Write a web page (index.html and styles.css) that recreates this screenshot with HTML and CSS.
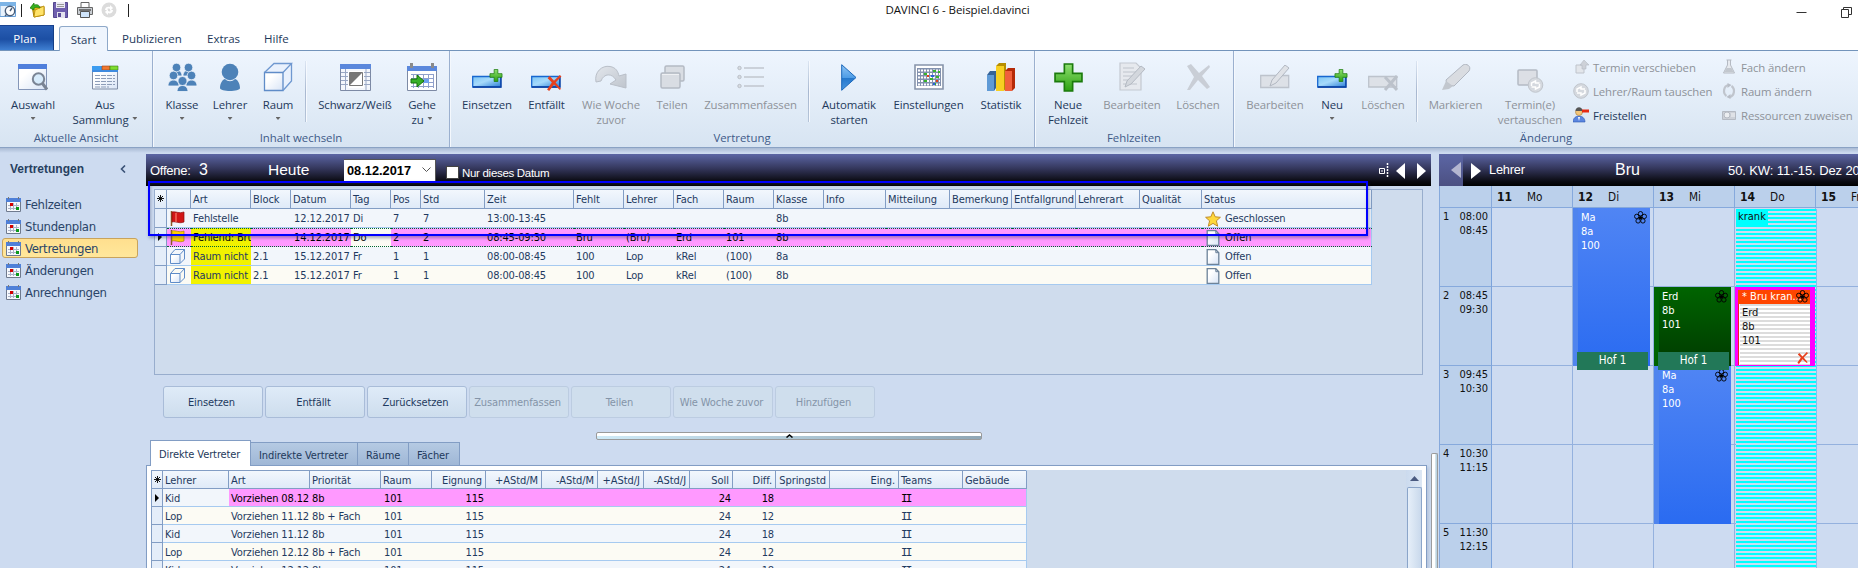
FILE: index.html
```html
<!DOCTYPE html>
<html lang="de">
<head>
<meta charset="utf-8">
<title>DAVINCI 6 - Beispiel.davinci</title>
<link rel="stylesheet" href="styles.css">
</head>
<body>
<svg class="defs" aria-hidden="true">
  <defs>
    <linearGradient id="gBlue" x1="0" y1="0" x2="1" y2="1"><stop offset="0" stop-color="#7cc4f4"/><stop offset=".45" stop-color="#a6dafb"/><stop offset="1" stop-color="#2c7fd6"/></linearGradient>
    <linearGradient id="gPlay" x1="0" y1="0" x2="0" y2="1"><stop offset="0" stop-color="#8ec4f5"/><stop offset=".5" stop-color="#4f9de6"/><stop offset=".52" stop-color="#2477cc"/><stop offset="1" stop-color="#4a97e0"/></linearGradient>
    <linearGradient id="gGreen" x1="0" y1="0" x2="0" y2="1"><stop offset="0" stop-color="#8fe070"/><stop offset="1" stop-color="#2ba011"/></linearGradient>
    <linearGradient id="gPaper" x1="0" y1="0" x2="1" y2="1"><stop offset=".3" stop-color="#fff"/><stop offset="1" stop-color="#d8e4f6"/></linearGradient>
    <linearGradient id="gGrey" x1="0" y1="0" x2="1" y2="1"><stop offset="0" stop-color="#e2e6ec"/><stop offset="1" stop-color="#bfc5cd"/></linearGradient>
    <symbol id="cal" viewBox="0 0 15 15"><path d="M.5 2.500h14v12H.5z" fill="#f6f8fc" stroke="#6f7a8e"/><path d="M0 1h15v4H0z" fill="#4f80d8"/><path d="M2.500 0v2M12.500 0v2" stroke="#777"/><path d="M2 8.500h11M2 11.500h11M4.500 6v7M7.500 6v7M10.500 6v7" stroke="#a9b2c6"/><path d="M4 6h3v3H4z" fill="#d40000"/><path d="M10 10h3v3h-3z" fill="#0c9a1c"/></symbol>
    <symbol id="star8" viewBox="0 0 7 7"><path d="M3.500 0v7M0 3.500h7M1 1l5 5M6 1 1 6" stroke="#000" stroke-width=".9"/></symbol>
    <symbol id="cube" viewBox="0 0 30 30"><path d="M1 10 11 1h18v18l-9 10H1z" fill="#e9f1fd"/><path d="M1.500 10.500h18.500v18H1.500z" fill="url(#gPaper)" stroke="#5f8cc8" stroke-width="1.300"/><path d="M1.500 10.500 11 1.500h17.500L20 10.500M28.500 1.500V19L20 28.500" fill="none" stroke="#6f98d0" stroke-width="1.300"/></symbol>
    <symbol id="cubeS" viewBox="0 0 15 15"><path d="M.5 5.500h9.500v9H.5z" fill="url(#gPaper)" stroke="#5f8cc8"/><path d="M.5 5.500 5 .5h9.500L10 5.500M14.500.5V10L10 14.500" fill="none" stroke="#5f8cc8"/></symbol>
    <symbol id="doc" viewBox="0 0 13 16"><path d="M.7.7h8.600l3 3v11.600H.7z" fill="url(#gPaper)" stroke="#6c8299" stroke-width="1.300"/><path d="M9.300.7v3h3" fill="none" stroke="#6c8299"/></symbol>
    <symbol id="plus" viewBox="0 0 28 28"><path d="M10 1h8v9h9v8h-9v9h-8v-9H1v-8h9z" fill="url(#gGreen)" stroke="#1b7a0c" stroke-width="1.600"/></symbol>
    <symbol id="flower" viewBox="0 0 13 13"><g fill="none" stroke="#000" stroke-width=".9"><circle cx="6.500" cy="2.700" r="2.200"/><circle cx="10.300" cy="5.400" r="2.200"/><circle cx="8.900" cy="9.900" r="2.200"/><circle cx="4.100" cy="9.900" r="2.200"/><circle cx="2.700" cy="5.400" r="2.200"/></g><circle cx="6.500" cy="6.800" r="1.700"/></symbol>
    <symbol id="cross" viewBox="0 0 14 15"><path d="M1 3 3 1l4 4.500L12.500 0 14 1.500 8.500 7l5 6-1 1L7 9l-4.500 6L.5 13.500 5 7z" fill="#e8401c"/></symbol>
    <symbol id="swap" viewBox="0 0 16 16"><circle cx="8" cy="8" r="7.300" fill="#d5d9df" stroke="#c0c5cc"/><path d="M4 9V6l4-2v2h4M12 7v3l-4 2v-2H4" fill="none" stroke="#fff" stroke-width="1.500"/></symbol>
  </defs>
</svg>

<header class="titlebar">
  <div class="quick">
    <svg width="16" height="16" viewBox="0 0 16 16"><path d="M0 .5h15.500v14H0z" fill="#e8f2fc" stroke="#6aa1d8"/><path d="M0 0h16v4H0z" fill="#7db4e6"/><circle cx="10" cy="9" r="4.700" fill="#fff" stroke="#4a5e7a" stroke-width="1.400"/><path d="m10 9 2-3M5 14l2-2" stroke="#4a5e7a" stroke-width="1.400"/></svg>
    <i class="tick"></i>
    <svg width="15" height="16" viewBox="0 0 15 16"><path d="M2 4h6l1 1h5v8L4 15z" fill="#e9b91c" stroke="#a57d0a"/><path d="M5 8 14 4v9L4 15z" fill="#ffe36a" stroke="#c29612"/><path d="M0 6 4 1v2c4-1 5 0 6 3-2-1-4-1-6 0v2z" fill="#38b020" stroke="#157a0a" stroke-width=".7"/></svg>
    <svg width="16" height="16" viewBox="0 0 16 16"><path d="M.5.5h14v15H.5z" fill="#6f5fae" stroke="#54478f"/><path d="M3 0h9v6H3z" fill="#eceaf5"/><path d="M4 2.500h7M4 4.500h7" stroke="#999"/><path d="M4 10h8v6H4z" fill="#e4e3ee"/><path d="M5 11h3v4H5z" fill="#5a4c98"/></svg>
    <svg width="16" height="16" viewBox="0 0 16 16"><path d="M4 .5h8V6H4z" fill="#fff" stroke="#666"/><path d="M.5 5.500h15v7H.5z" fill="#c9cdd2" stroke="#666"/><path d="M2 8h12" stroke="#555" stroke-width="1.500"/><path d="M3.500 9.500h9v6h-9z" fill="#cfe4fa" stroke="#555"/></svg>
    <svg width="16" height="16" viewBox="0 0 16 16"><circle cx="8" cy="8" r="7.500" fill="#dcdcdc"/><path d="M4 8c0-3 3-4 5-3V3l3 3-3 3V7C7 6 6 7 6 8zM12 8c0 3-3 4-5 3v2l-3-3 3-3v2c2 1 3 0 3-1z" fill="#fff"/></svg>
    <i class="tick last"></i>
  </div>
  <div class="caption">DAVINCI 6 - Beispiel.davinci</div>
  <div class="wincontrols">
    <svg width="11" height="10" viewBox="0 0 11 10"><path d="M.5 5.500h10" stroke="#333"/></svg>
    <svg width="11" height="11" viewBox="0 0 11 11"><path d="M.5 2.500h7v8h-7zM2.500 2.500v-2h8v7h-3" fill="none" stroke="#333"/></svg>
  </div>
</header>

<nav class="tabs">
  <a class="plan">Plan</a><a class="active">Start</a><a class="t1">Publizieren</a><a class="t2">Extras</a><a class="t3">Hilfe</a>
</nav>

<section class="ribbon">
  <div class="group g1">
    <div class="tools">
      <div class="tool"><span class="ico"><svg width="30" height="28" viewBox="0 0 30 28"><path d="M.5 2.500h28v24H.5z" fill="url(#gPaper)" stroke="#8496b8"/><path d="M0 1h29v5H0z" fill="#4f7fdc"/><circle cx="20.500" cy="16" r="5.700" fill="#d7ebfb" stroke="#7a8494" stroke-width="2"/><path d="m24.500 20.500 4.500 6" stroke="#7a8494" stroke-width="3"/></svg></span>Auswahl<i class="drop"></i></div>
      <div class="tool"><span class="ico"><svg width="27" height="25" viewBox="0 0 27 25"><path d="M.5 3h25v21H.5z" fill="url(#gPaper)" stroke="#7f8ca5"/><path d="M0 1h10v5H0z" fill="#3c9cf0"/><path d="M10 1h8v4h-8z" fill="#f07830" stroke="#a04010" stroke-width=".6"/><path d="M18 1h8v4h-8z" fill="#7fdc30" stroke="#3a8010" stroke-width=".6"/><path d="M0 6h26" stroke="#3f8be0" stroke-width="2"/><path d="M3 10.500h20M3 13.500h20M3 16.500h20M3 19.500h20M3 22h14" stroke="#8d9db8" stroke-dasharray="5 1"/></svg></span>Aus<br>Sammlung <i class="drop in"></i></div>
    </div>
    <h2>Aktuelle Ansicht</h2>
  </div>
  <div class="group g2">
    <div class="tools">
      <div class="tool"><span class="ico"><svg width="29" height="29" viewBox="0 0 29 29"><g fill="#4d82b8" stroke="#edf4fc" stroke-width=".8"><path d="M3 13c0-8 11-8 11 0zM15 13c0-8 11-8 11 0z"/><circle cx="8.500" cy="4.500" r="4.300"/><circle cx="20.500" cy="4.500" r="4.300"/><path d="M0 23c0-8 11-8 11 0zM18 23c0-8 11-8 11 0z"/><circle cx="5.500" cy="12.500" r="4.300"/><circle cx="23.500" cy="12.500" r="4.300"/><path d="M9 28.500c0-8 11-8 11 0z"/><circle cx="14.500" cy="18" r="4.500"/></g></svg></span>Klasse<i class="drop"></i></div>
      <div class="tool"><span class="ico"><svg width="22" height="29" viewBox="0 0 22 29"><circle cx="11" cy="9" r="8.300" fill="#4d82b8"/><path d="M1 25c0-5 3-9 5-9 3 3 7 3 10 0 2 0 5 4 5 9 0 4-20 4-20 0z" fill="#4d82b8"/></svg></span>Lehrer<i class="drop"></i></div>
      <div class="tool"><span class="ico"><svg width="30" height="30"><use href="#cube"/></svg></span>Raum<i class="drop"></i></div>
      <i class="sep"></i>
      <div class="tool"><span class="ico"><svg width="31" height="28" viewBox="0 0 31 28"><path d="M.5 1.500h30v26H.5z" fill="#f4f7fc" stroke="#7d8aa5"/><path d="M0 1h31v5H0z" fill="#5b88dc"/><path d="M1 9.500h29M1 13.500h29M1 17.500h29M1 21.500h29M5.500 6v21M26 6v21" stroke="#9aa8c4"/><path d="M8 8h16v17H8z" fill="#fff"/><path d="M9.500 9.500h13v13h-13z" fill="#fff" stroke="#777"/><path d="M9.500 9.500h13l-13 13z" fill="#777"/></svg></span>Schwarz/Weiß</div>
      <div class="tool"><span class="ico"><svg width="31" height="29" viewBox="0 0 31 29"><path d="M.5 3.500h29v24H.5z" fill="#fff" stroke="#7d8aa5"/><path d="M0 3h30v5H0z" fill="#5b88dc"/><path d="M4.500 0v5M25.500 0v5" stroke="#8a8a8a" stroke-width="3"/><path d="M4 11.500h23M4 15.500h23M4 19.500h23M4 23.500h23M6.500 11v14M11.500 11v14M16.500 11v14M21.500 11v14M26.500 11v14" stroke="#8fa0cc"/><path d="M17 16h5v4h-5z" fill="#6fa2f0"/><path d="M4 16h6v-4l7 6-7 6v-4H4z" fill="#38b028" stroke="#14700a"/></svg></span>Gehe<br>zu <i class="drop in"></i></div>
    </div>
    <h2>Inhalt wechseln</h2>
  </div>
  <div class="group g3">
    <div class="tools">
      <div class="tool"><span class="ico low"><svg width="31" height="19" viewBox="0 0 31 19"><path d="M.7 7.500h28v10.500H.7z" fill="url(#gBlue)" stroke="#1767d0" stroke-width="1.300"/><path d="M1 18h28V8" fill="none" stroke="#0b3fa0" stroke-width="1.300"/><svg x="17" width="14" height="13"><use href="#plus"/></svg></svg></span>Einsetzen</div>
      <div class="tool"><span class="ico low"><svg width="31" height="22" viewBox="0 0 31 22"><path d="M.7 7.500h28v10.500H.7z" fill="url(#gBlue)" stroke="#1767d0" stroke-width="1.300"/><path d="M1 18h28V8" fill="none" stroke="#0b3fa0" stroke-width="1.300"/><svg x="15" y="6" width="16" height="16"><use href="#cross"/></svg></svg></span>Entfällt</div>
      <div class="tool off"><span class="ico"><svg width="32" height="24" viewBox="0 0 32 24"><path d="M1 17C-1 7 7 0 15 1.500c6 1 8 5 9 9.500l7-2v14l-16-4 6-4C17 8 9 8 6 16z" fill="url(#gGrey)" stroke="#b9bfc8"/></svg></span>Wie Woche<br>zuvor</div>
      <div class="tool off"><span class="ico"><svg width="25" height="24" viewBox="0 0 25 24"><rect x="5" y="1" width="19" height="15" rx="1.500" fill="#d9dde3" stroke="#b4bac4" stroke-width="1.500"/><rect x="1" y="8" width="19" height="15" rx="1.500" fill="#d9dde3" stroke="#b4bac4" stroke-width="1.500"/><path d="M2 9.500h17" stroke="#eef0f3"/></svg></span>Teilen</div>
      <div class="tool off"><span class="ico"><svg width="28" height="24" viewBox="0 0 28 24"><g fill="#d8dce1" stroke="#b9bfc8"><circle cx="2.500" cy="3" r="1.700"/><circle cx="2.500" cy="12" r="1.700"/><circle cx="2.500" cy="21" r="1.700"/></g><path d="M7 3h20M7 12h20M7 21h20" stroke="#c1c6ce" stroke-width="1.600"/></svg></span>Zusammenfassen</div>
      <i class="sep"></i>
      <div class="tool"><span class="ico"><svg width="16" height="27" viewBox="0 0 16 27"><path d="M.7.700 15 13.500.7 26.300z" fill="url(#gPlay)" stroke="#1a67ba"/></svg></span>Automatik<br>starten</div>
      <div class="tool"><span class="ico"><svg width="30" height="26" viewBox="0 0 30 26"><path d="M1 1h28v24H1z" fill="#fff" stroke="#8794aa" stroke-width="1.600"/><path d="M3 4h24v18H3z" fill="#8291ae"/><path d="M4 6.500h22M4 10h22M4 13.500h22M4 17h22M4 20.500h22" stroke="#fff" stroke-width="2" stroke-dasharray="2 1"/><path d="M10 9h3v2h-3zM19 6h3v2h-3zM24 7h2v2h-2zM16 14h3v2h-3zM10 16h3v2h-3zM22 12h3v2h-3zM19 19h3v2h-3z" fill="#39b52b"/><path d="M13 11h2v2h-2zM22 16h2v2h-2z" fill="#e3401a"/><path d="M17 11h3v2h-3zM19 19h2v2h-2z" fill="#2a62dc"/></svg></span>Einstellungen</div>
      <div class="tool"><span class="ico"><svg width="29" height="30" viewBox="0 0 29 30"><path d="M0 13 3 9h6v17l-2 3H0z" fill="#356398"/><path d="M0 13h7v16H0z" fill="#5f9ad6"/><path d="m9 4 3-3h7v25l-2 3H9z" fill="#b78e00"/><path d="M9 4h8v25H9z" fill="#f7cf22"/><path d="m18 9 3-3h7v20l-3 3h-7z" fill="#b52a08"/><path d="M18 9h7v20h-7z" fill="#f0603c"/></svg></span>Statistik</div>
    </div>
    <h2>Vertretung</h2>
  </div>
  <div class="group g4">
    <div class="tools">
      <div class="tool"><span class="ico"><svg width="29" height="29"><use href="#plus"/></svg></span>Neue<br>Fehlzeit</div>
      <div class="tool off"><span class="ico"><svg width="26" height="30" viewBox="0 0 26 30"><path d="M1 1h16l5 5v22H1z" fill="#e6e9ee" stroke="#c4c9d1" stroke-width="1.200"/><path d="M4 6h11M4 10h14M4 14h11M4 18h8M4 22h14" stroke="#bfc4cc"/><path d="M22 4l4 3-14 15-6 3 2-6z" fill="#d3d7dd" stroke="#b4bac3"/></svg></span>Bearbeiten</div>
      <div class="tool off"><span class="ico"><svg width="25" height="28" viewBox="0 0 25 28"><path d="M1 3 5 1l8 9L23 2l1 2-8 9 8 11-3 2-9-9-8 10H1l7-13z" fill="#c9ced6"/></svg></span>Löschen</div>
    </div>
    <h2>Fehlzeiten</h2>
  </div>
  <div class="group g5">
    <div class="tools">
      <div class="tool off"><span class="ico"><svg width="30" height="24" viewBox="0 0 30 24"><path d="M.7 10.500h28v12H.7z" fill="#dde1e7" stroke="#bdc3cc" stroke-width="1.300"/><path d="m25 0 4 3L16 18l-6 3 2-6z" fill="#dfe2e7" stroke="#b1b7c1"/></svg></span>Bearbeiten</div>
      <div class="tool"><span class="ico low"><svg width="31" height="19" viewBox="0 0 31 19"><path d="M.7 7.500h28v10.500H.7z" fill="url(#gBlue)" stroke="#1767d0" stroke-width="1.300"/><path d="M1 18h28V8" fill="none" stroke="#0b3fa0" stroke-width="1.300"/><svg x="17" width="14" height="13"><use href="#plus"/></svg></svg></span>Neu<i class="drop"></i></div>
      <div class="tool off"><span class="ico low"><svg width="30" height="22" viewBox="0 0 30 22"><path d="M.7 7.500h28v10.500H.7z" fill="#dde1e7" stroke="#bdc3cc" stroke-width="1.300"/><path d="m17 8 12 13M29 7 17 21" stroke="#bcc2cb" stroke-width="3"/></svg></span>Löschen</div>
      <i class="sep"></i>
      <div class="tool off"><span class="ico"><svg width="30" height="27" viewBox="0 0 30 27"><path d="M22 1c3-2 9 1 6 6L13 22l-7-1-1-5z" fill="#d9dce1" stroke="#b1b7c1"/><path d="m5 17 7 5-4 3-7 1z" fill="#c2c7ce"/></svg></span>Markieren</div>
      <div class="tool off"><span class="ico low"><svg width="27" height="24" viewBox="0 0 27 24"><rect x="1" y="1" width="19" height="15" rx="1" fill="#dcdfe5" stroke="#b4bac4" stroke-width="1.500"/><svg x="10" y="8" width="17" height="16"><use href="#swap"/></svg></svg></span>Termin(e)<br>vertauschen</div>
      <ul class="small">
        <li class="off"><svg width="16" height="16" viewBox="0 0 16 16"><path d="M3 6h8v8H3z" fill="#e3e6eb" stroke="#bfc4cc"/><path d="m11 1 5 5h-3v4H9V6H7z" fill="#cdd1d8" stroke="#b4bac3" stroke-width=".6"/></svg>Termin verschieben</li>
        <li class="off"><svg width="16" height="16"><use href="#swap"/></svg>Lehrer/Raum tauschen</li>
        <li><svg width="16" height="18" viewBox="0 0 16 16"><path d="M0 15c0-8 12-8 12 0z" fill="#5b86e0" stroke="#2d58b0" stroke-width=".6"/><circle cx="6" cy="5" r="3.500" fill="#f5c678" stroke="#a27a3e" stroke-width=".6"/><path d="M2.500 4c0-5 7-5 7 0z" fill="#555"/><path d="M9 2.500h7v3H9z" fill="#e62b12"/><path d="m5 10 1 4 1-4z" fill="#fff"/></svg>Freistellen</li>
      </ul>
      <ul class="small">
        <li class="off"><svg width="13" height="16" viewBox="0 0 13 16"><path d="M4 1h5M5 1v5L1 14h11L8 6V1" fill="#e6e9ee" stroke="#b5bac3"/><path d="M4 9h5l2 4H2z" fill="#c2c7ce"/></svg>Fach ändern</li>
        <li class="off"><svg width="13" height="16" viewBox="0 0 13 16"><path d="M6 2c-5 1-6 8-2 11M7 14c5-1 6-8 2-11" fill="none" stroke="#c0c5cd" stroke-width="2.200"/><path d="m5 0 4 2-4 3zM8 11l-4 3 4 2z" fill="#b8bdc6"/></svg>Raum ändern</li>
        <li class="off"><svg width="14" height="12" viewBox="0 0 14 12"><path d="M.5 2.500h13v8H.5z" fill="#cdd1d8" stroke="#b5bac3"/><circle cx="5" cy="6" r="3" fill="#eceef1" stroke="#b5bac3"/><path d="M9 5h4M9 7h4" stroke="#f2f3f5"/></svg>Ressourcen zuweisen</li>
      </ul>
    </div>
    <h2>Änderung</h2>
  </div>
</section>

<main class="work">
  <aside class="side">
    <h3>Vertretungen<svg width="6" height="8" viewBox="0 0 6 8"><path d="M5 .5 1.500 4 5 7.500" fill="none" stroke="#3b5276" stroke-width="1.600"/></svg></h3>
    <a><svg width="15" height="15"><use href="#cal"/></svg>Fehlzeiten</a>
    <a><svg width="15" height="15"><use href="#cal"/></svg>Stundenplan</a>
    <a class="sel"><svg width="15" height="15"><use href="#cal"/></svg>Vertretungen</a>
    <a><svg width="15" height="15"><use href="#cal"/></svg>Änderungen</a>
    <a><svg width="15" height="15"><use href="#cal"/></svg>Anrechnungen</a>
  </aside>

  <section class="center">
    <div class="bar">
      <span class="offene">Offene:</span><span class="num">3</span><span class="heute">Heute</span>
      <span class="date">08.12.2017<svg width="9" height="6" viewBox="0 0 9 6"><path d="m.5.500 4 4 4-4" fill="none" stroke="#555"/></svg></span>
      <i class="check"></i><span class="nur">Nur dieses Datum</span>
      <svg class="nav" width="47" height="18" viewBox="0 0 47 18"><path d="M.5 6.500h5v5h-5z" fill="none" stroke="#fff"/><path d="M2 9h2" stroke="#fff"/><path d="M8.500 1v15" stroke="#fff" stroke-width="1.500" stroke-dasharray="2 1"/><path d="M26 1v16l-9-8zM38 1v16l9-8z" fill="#fff"/></svg>
    </div>

    <div class="panel">
      <table class="grid upper">
        <tr class="head"><th><svg width="7" height="7"><use href="#star8"/></svg><th><th>Art<th>Block<th>Datum<th>Tag<th>Pos<th>Std<th>Zeit<th>Fehlt<th>Lehrer<th>Fach<th>Raum<th>Klasse<th>Info<th>Mitteilung<th>Bemerkung<th>Entfallgrund<th>Lehrerart<th>Qualität<th>Status</tr>
        <tr><td><td><svg width="15" height="15" viewBox="0 0 15 15"><path d="M1.500 0v15" stroke="#8a5a28" stroke-width="1.500"/><path d="M2 1c4-1 7 2 12 0v10c-5 2-8-1-12 0z" fill="#d21616" stroke="#8d0c0c" stroke-width=".7"/><path d="M6 2v9" stroke="#f06a5a" stroke-width="1.500"/></svg><td>Fehlstelle<td><td>12.12.2017<td>Di<td>7<td>7<td>13:00-13:45<td><td><td><td><td>8b<td><td><td><td><td><td><td><svg width="16" height="16" viewBox="0 0 16 16"><path d="m8 .800 2.200 5 5.200.5-4 3.500 1.300 5.400L8 12.400l-4.700 2.800 1.300-5.400-4-3.500 5.200-.5z" fill="#ffd83c" stroke="#c08d2c"/></svg>Geschlossen</tr>
        <tr class="cur"><td><i class="ptr"></i><td><svg width="15" height="15" viewBox="0 0 15 15"><path d="M1.500 0v15" stroke="#8a5a28" stroke-width="1.500"/><path d="M2 1c4-1 7 2 12 0v10c-5 2-8-1-12 0z" fill="#ffd000" stroke="#a88400" stroke-width=".7"/></svg><td>Fehlend: Bru<td><td>14.12.2017<td>Do<td>2<td>2<td>08:45-09:30<td>Bru<td>(Bru)<td>Erd<td>101<td>8b<td><td><td><td><td><td><td><svg width="16" height="16"><use href="#doc"/></svg>Offen</tr>
        <tr class="miss"><td><td><svg width="15" height="15"><use href="#cubeS"/></svg><td>Raum nicht<td>2.1<td>15.12.2017<td>Fr<td>1<td>1<td>08:00-08:45<td>100<td>Lop<td>kRel<td>(100)<td>8a<td><td><td><td><td><td><td><svg width="16" height="16"><use href="#doc"/></svg>Offen</tr>
        <tr class="miss alt"><td><td><svg width="15" height="15"><use href="#cubeS"/></svg><td>Raum nicht<td>2.1<td>15.12.2017<td>Fr<td>1<td>1<td>08:00-08:45<td>100<td>Lop<td>kRel<td>(100)<td>8b<td><td><td><td><td><td><td><svg width="16" height="16"><use href="#doc"/></svg>Offen</tr>
      </table>
    </div>
    <div class="marker"></div>

    <div class="actions">
      <button>Einsetzen</button><button>Entfällt</button><button>Zurücksetzen</button><button disabled>Zusammenfassen</button><button disabled>Teilen</button><button disabled>Wie Woche zuvor</button><button disabled>Hinzufügen</button>
    </div>
    <div class="splitter"><svg width="7" height="4" viewBox="0 0 7 4"><path d="M.5 3.500 3.500 1l3 2.500" fill="none" stroke="#000" stroke-width="1.500"/></svg></div>

    <div class="subtabs"><a class="on">Direkte Vertreter</a><a>Indirekte Vertreter</a><a>Räume</a><a>Fächer</a></div>
    <div class="lowerpanel">
      <table class="grid lower">
        <tr class="head"><th><svg width="7" height="7"><use href="#star8"/></svg><th>Lehrer<th>Art<th>Priorität<th>Raum<th>Eignung<th>+AStd/M<th>-AStd/M<th>+AStd/J<th>-AStd/J<th>Soll<th>Diff.<th>Springstd<th>Eing.<th>Teams<th>Gebäude</tr>
        <tr class="cur"><td><i class="ptr"></i><td>Kid<td>Vorziehen 08.12<td>8b<td>101<td>115<td><td><td><td><td>24<td>18<td><td><td>II<td></tr>
        <tr class="alt"><td><td>Lop<td>Vorziehen 11.12<td>8b + Fach<td>101<td>115<td><td><td><td><td>24<td>12<td><td><td>II<td></tr>
        <tr><td><td>Kid<td>Vorziehen 11.12<td>8b<td>101<td>115<td><td><td><td><td>24<td>18<td><td><td>II<td></tr>
        <tr class="alt"><td><td>Lop<td>Vorziehen 12.12<td>8b + Fach<td>101<td>115<td><td><td><td><td>24<td>12<td><td><td>II<td></tr>
        <tr><td><td>Kid<td>Vorziehen 12.12<td>8b<td>101<td>115<td><td><td><td><td>24<td>18<td><td><td>II<td></tr>
      </table>
      <div class="scroll"><svg width="9" height="5" viewBox="0 0 9 5"><path d="M0 5 4.500 0 9 5z" fill="#4a5a80"/></svg><i></i></div>
    </div>
  </section>

  <div class="vsplit"><i></i></div>

  <section class="cal">
    <div class="bar">
      <span class="prev"><svg width="10" height="16" viewBox="0 0 10 16"><path d="M10 0v16L0 8z" fill="#b4b6d0"/></svg></span>
      <svg width="10" height="16" viewBox="0 0 10 16"><path d="M0 0v16l10-8z" fill="#fff"/></svg>
      <span class="who">Lehrer</span><span class="bru">Bru</span><span class="week">50. KW: 11.-15. Dez 2017</span>
    </div>
    <div class="stack">
      <div class="week-grid">
        <div class="day corner"></div><div class="day"><b>11</b>Mo</div><div class="day"><b>12</b>Di</div><div class="day"><b>13</b>Mi</div><div class="day"><b>14</b>Do</div><div class="day"><b>15</b>Fr</div>
        <div class="time"><span>1</span><span>08:00<br>08:45</span></div><i></i><i></i><i></i><i></i><i></i>
        <div class="time"><span>2</span><span>08:45<br>09:30</span></div><i></i><i></i><i></i><i></i><i></i>
        <div class="time"><span>3</span><span>09:45<br>10:30</span></div><i></i><i></i><i></i><i></i><i></i>
        <div class="time"><span>4</span><span>10:30<br>11:15</span></div><i></i><i></i><i></i><i></i><i></i>
        <div class="time"><span>5</span><span>11:30<br>12:15</span></div><i></i><i></i><i></i><i></i><i></i>
      </div>
      <div class="week-grid events">
        <div class="sick"><span>krank</span></div>
        <div class="ev blue e1">Ma<br>8a<br>100<svg width="13" height="13"><use href="#flower"/></svg><em>Hof 1</em></div>
        <div class="ev blue e3">Ma<br>8a<br>100<svg width="13" height="13"><use href="#flower"/></svg></div>
        <div class="ev green e2">Erd<br>8b<br>101<svg width="13" height="13"><use href="#flower"/></svg><em>Hof 1</em></div>
        <div class="ev out"><div class="hd">* Bru kran...</div>Erd<br>8b<br>101<svg width="13" height="13"><use href="#flower"/></svg><svg class="x" width="11" height="12"><use href="#cross"/></svg></div>
      </div>
    </div>
  </section>
</main>
</body>
</html>
```

FILE: styles.css
```css
* { box-sizing: border-box; }
body { margin: 0; width: 1858px; height: 568px; overflow: hidden; display: flex; flex-direction: column; background: #cddbf0; color: #1e395b; font: 11px "DejaVu Sans Condensed", "DejaVu Sans", sans-serif; }
svg { display: block; flex: none; }
.defs { position: absolute; width: 0; height: 0; }

/* title bar */
.titlebar { height: 25px; flex: none; background: #fff; display: grid; grid-template-columns: 600px 1fr 600px; font: 11.5px "Open Sans", sans-serif; color: #111; }
.quick { display: flex; align-items: flex-start; padding-top: 2px; }
.quick .tick { width: 1px; height: 13px; margin: 2px 8px 0 5px; background: #222; }
.quick svg { margin-right: 8px; }
.quick svg:first-child { margin-right: 0; }
.quick .last { margin-left: 3px; }
.caption { text-align: center; line-height: 19px; padding-left: 57px; letter-spacing: -.07px; }
.wincontrols { display: flex; justify-content: flex-end; gap: 34px; padding: 7px 6px 0 0; }

/* ribbon tabs */
.tabs { height: 26px; flex: none; background: #fff; border-bottom: 1px solid #7394bb; display: flex; font: 11.5px/28px "Open Sans", sans-serif; }
.tabs a { display: block; }
.plan { width: 54px; height: 25px; text-align: center; padding-right: 3px; line-height: 25px; color: #fff; background: linear-gradient(#2a5fb5, #1c4fa4 55%, #3f7fd2); border-right: 1px solid #153f86; border-top: 1px solid #1a4390; }
.tabs .active { width: 49px; height: 26px; margin: 1px 0 0 5px; text-align: center; line-height: 26px; background: #eff5fd; border: 1px solid #8fa9c9; border-bottom: 0; border-radius: 3px 3px 0 0; }
.tabs .t1 { margin-left: 14px; width: 85px; }
.tabs .t2 { width: 57px; }

/* ribbon */
.ribbon { height: 97px; flex: none; display: flex; background: linear-gradient(#eef5fe, #e3edf8 50%, #d7e4f2); font: 11.4px/15px "Open Sans", sans-serif; border-bottom: 1px solid #8aa2c4; }
.group { border-right: 1px solid #9bb0cf; box-shadow: 1px 0 #f4f8fd; display: flex; flex-direction: column; }
.group h2 { margin: 0; height: 19px; font: inherit; line-height: 19px; text-align: center; color: #3e5a88; }
.tools { height: 77px; display: grid; padding-top: 11px; }
.tool { text-align: center; white-space: nowrap; letter-spacing: -.1px; }
.ico { display: flex; align-items: center; justify-content: center; height: 30px; margin-bottom: 5px; }
.ico.low { align-items: flex-start; padding-top: 7px; }
.off { color: #8e9299; }
.drop { display: block; width: 5px; height: 3px; margin: 5px auto 0; background: #666; clip-path: polygon(0 0, 100% 0, 50% 100%); }
.drop.in { display: inline-block; vertical-align: 4px; margin: 0 0 0 1px; }
.sep { width: 1px; height: 61px; justify-self: center; background: linear-gradient(#dbe5f2, #a8b8d0 50%, #b5c4d8); box-shadow: 1px 0 #f6f9fe; margin-top: -1px; }
.g1 { width: 153px; } .g1 .tools { grid-template-columns: 66px 78px; }
.g2 { width: 297px; } .g2 .tools { grid-template-columns: 48px 48px 48px 6px 94px 40px; padding-left: 5px; }
.g3 { width: 585px; } .g3 .tools { grid-template-columns: 60px 59px 70px 52px 105px 11px 70px 89px 56px; padding-left: 7px; }
.g4 { width: 199px; } .g4 .tools { grid-template-columns: 48px 80px 52px; padding-left: 9px; }
.g5 { width: 624px; border: 0; } .g5 .tools { grid-template-columns: 66px 48px 54px 13px 65px 84px 148px 138px; padding-left: 8px; }
.small { margin: -7px 0 0; padding: 0; list-style: none; letter-spacing: -.12px; }
.small li { height: 24px; display: flex; align-items: center; gap: 4px; padding-left: 1px; white-space: nowrap; }
.small svg { width: 16px; }

/* work area */
.work { flex: 1; min-height: 0; display: flex; align-items: stretch; padding-top: 6px; background: linear-gradient(#a9bad4, #cddbf0 5px); }
.side { width: 146px; flex: none; padding: 0 8px 0 2px; font-size: 13px; letter-spacing: -.3px; color: #2a4468; }
.side h3 { margin: 0 0 17px; height: 23px; padding: 6px 12px 0 8px; display: flex; justify-content: space-between; align-items: center; font: bold 12px/18px "Liberation Sans", Arial, sans-serif; letter-spacing: 0; color: #27405f; }
.side a { height: 20px; margin-bottom: 2px; padding-left: 3px; display: flex; align-items: center; gap: 4px; border: 1px solid transparent; border-radius: 3px; }
.side .sel { background: linear-gradient(#ffdf8e, #ffe79b); border-color: #c8a35c; }

.center { width: 1285px; flex: none; position: relative; display: flex; flex-direction: column; }
.bar { height: 32px; flex: none; display: flex; align-items: center; color: #fff; background: linear-gradient(#5c66a5, #34375c 45%, #0b0b12 85%, #000); font: 13px "Liberation Sans", Arial, sans-serif; white-space: nowrap; }
.bar > * { flex: none; }
.offene { width: 53px; padding-left: 4px; letter-spacing: -.25px; }
.num { width: 69px; font-size: 16px; }
.heute { width: 76px; font-size: 15.5px; }
.date { width: 92px; height: 23px; padding: 0 4px 0 3px; display: flex; align-items: center; justify-content: space-between; background: #fff; color: #000; font-weight: bold; font-size: 12.8px; border: 1px solid #555; border-width: 1px 1px 1px 0; }
.check { width: 13px; height: 13px; margin: 4px 3px 0 10px; background: #fff; border: 1px solid #444; }
.nur { font-size: 11.5px; margin-top: 6px; letter-spacing: -.3px; }
.nav { margin: 1px 5px 0 auto; }

.panel { height: 186px; flex: none; margin: 3px 8px 0 8px; border: 1px solid #98adcd; background: #cfdced; }
.grid { border-spacing: 0; display: block; color: #1f3a60; white-space: nowrap; }
.grid tbody { display: block; }
.grid tr { display: grid; height: 19px; background: #f2f6fb; }
.grid tr.alt { background: #fcfbf4; }
.grid td, .grid th { padding: 0 0 0 2px; overflow: hidden; font-weight: normal; text-align: left; line-height: 19px; border-bottom: 1px solid #a6caf0; letter-spacing: -.15px; }
.grid th { border-right: 1px solid #829dc4; border-bottom: 1px solid #829dc4; background: linear-gradient(#f2f7fd, #dfeaf8); letter-spacing: -.05px; }
.grid td:first-child { background: #e4edf9; border-right: 1px solid #829dc4; border-bottom-color: #829dc4; }
.grid th:first-child { padding: 5px 0 0 2px; }
.grid tr.cur { background: #ff99ff; color: #000; }
.ptr { display: block; width: 4px; height: 8px; margin: 5px 0 0 1px; background: #000; clip-path: polygon(0 0, 100% 50%, 0 100%); }
.upper { width: 1217px; border-right: 1px solid #a6caf0; }
.upper tr { grid-template-columns: 12px 24px 60px 40px 60px 40px 30px 64px 89px 50px 50px 50px 50px 50px 62px 64px 62px 64px 64px 62px 170px; }
.upper td svg { margin: 2px 0 0 1px; }
.upper td:nth-child(5) { padding-left: 3px; letter-spacing: -.1px; }
.upper td:last-child { display: flex; gap: 4px; }
.upper .miss td:nth-child(3), .upper .cur td:nth-child(3) { background: #f2f200; }
.upper .cur td { border-top: 1px dotted #063; border-bottom: 1px dotted #063; line-height: 17px; }
.upper .cur td:first-child { border-top: 0; border-bottom: 1px solid #829dc4; }
.upper .cur td svg { margin-top: 1px; }
.upper .cur td:nth-child(6) { background: #fcfbf4; }
.marker { position: absolute; left: 2px; top: 27px; width: 1220px; height: 55px; border: 2px solid #00f; box-shadow: 1px 2px 3px rgba(40, 50, 90, .4), inset 1px 2px 3px rgba(40, 50, 90, .3); }

.actions { display: flex; gap: 2px; padding: 11px 0 0 17px; }
.actions button { width: 100px; height: 32px; padding: 0 3px 0 0; font: inherit; letter-spacing: -.1px; color: #1f3a60; border: 1px solid #a9bcd8; border-radius: 3px; background: linear-gradient(#dfebf8, #cddded); }
.actions button:disabled { color: #8494a8; border-color: #bccce1; background: #cfdeed; }
.splitter { width: 386px; height: 8px; margin: 14px 0 0 450px; flex: none; border: 1px solid #9a9a9a; border-radius: 2px; background: linear-gradient(#fff 3px, transparent 3px), linear-gradient(90deg, #cfeaf7, #8fa7b6); display: flex; justify-content: center; align-items: center; }
.subtabs { height: 26px; flex: none; padding-left: 4px; display: flex; align-items: flex-end; position: relative; z-index: 1; white-space: nowrap; letter-spacing: -.1px; }
.subtabs a { height: 24px; padding: 0 0 0 8px; line-height: 25px; background: linear-gradient(#b5cae3, #9fb7d6); border: 1px solid #829dc4; border-left: 0; }
.subtabs a:nth-child(2) { width: 107px; } .subtabs a:nth-child(3), .subtabs a:nth-child(4) { width: 51px; }
.subtabs .on { width: 101px; height: 26px; background: #fff; border: 1px solid #829dc4; border-bottom: 0; line-height: 27px; }
.lowerpanel { width: 1281px; flex: 1; min-height: 0; margin-top: -1px; padding: 4px 4px 0 4px; display: flex; border: 1px solid #829dc4; border-bottom: 0; background: linear-gradient(#cfdced, #cfdced) content-box, #fff; box-shadow: 2px 2px 3px #b4c4dc; overflow: hidden; }
.lower { width: 876px; flex: none; border-right: 1px solid #a6caf0; border-left: 1px solid #829dc4; }
.lower tr { height: 18px; grid-template-columns: 11px 66px 81px 71px 51px 54px 56px 56px 46px 46px 43px 43px 54px 69px 64px 64px; }
.lower tr.head { height: 19px; border-top: 1px solid #829dc4; }
.lower td, .lower th { line-height: 19px; }
.lower td:nth-child(5) { padding-left: 3px; }
.lower td:nth-child(15) { font-family: "DejaVu Sans Mono", monospace; letter-spacing: -1.800px; }
.lower :is(td, th):nth-child(n+6):nth-child(-n+14) { text-align: right; padding-right: 3px; }
.lower td:nth-child(n+6):nth-child(-n+14) { padding-right: 2px; }
.lower .cur td:nth-child(2) { background: #f2f6fb; color: #1f3a60; }
.scroll { width: 16px; margin-left: auto; background: linear-gradient(90deg, #cbdaee, #dce7f4); display: flex; flex-direction: column; align-items: center; padding-top: 6px; }
.scroll i { width: 15px; flex: 1; margin-top: 6px; border: 1px solid #8ba5c9; border-bottom: 0; border-radius: 2px 2px 0 0; background: linear-gradient(90deg, #e6eff9, #c9d9ec); }
.vsplit { width: 8px; flex: none; padding-top: 299px; display: flex; }
.vsplit i { width: 7px; border: 1px solid #9a9a9a; border-bottom: 0; border-radius: 2px 2px 0 0; background: linear-gradient(90deg, #fff 3px, #a8c8d8 4px, #cfe0ee); }

/* calendar */
.cal { width: 419px; flex: none; overflow: hidden; display: flex; flex-direction: column; }
.cal .bar svg { margin-top: 2px; }
.prev { width: 24px; height: 32px; padding: 6px 0 0 12px; margin-right: 8px; background: linear-gradient(#5c66a5, #4c5082); }
.who { width: 134px; padding-left: 8px; margin-top: -2px; letter-spacing: -.2px; font-size: 12.8px; }
.bru { width: 113px; font-size: 16px; }
.week { font-size: 13px; letter-spacing: -.1px; }
.stack { flex: none; display: grid; }
.week-grid { grid-area: 1 / 1; display: grid; grid-template-columns: 52px repeat(5, 81px); grid-template-rows: 22px repeat(5, 79px); color: #111; border-left: 1px solid #86a9dc; line-height: 14px; }
.week-grid > i { border-right: 1px solid #94b1de; border-bottom: 1px solid #94b1de; background: #cddbf1; }
.events { border-color: transparent; }
.day { background: #bbd0eb; border-right: 1px solid #86a9dc; border-bottom: 1px solid #86a9dc; padding-left: 5px; display: flex; gap: 15px; align-items: center; font-size: 11.7px; }
.day b { font-size: 12px; }
.time { background: #bbd0eb; border-right: 1px solid #7ba3dc; border-bottom: 1px solid #86a9dc; padding: 2px 3px 0 3px; display: flex; justify-content: space-between; text-align: right; }
.sick { grid-area: 2 / 5 / 7 / 6; margin: 1px -1px 0 1px; background: repeating-linear-gradient(#0ff 0 2px, #cfdcf0 2px 4px); border-right: 1px solid #7fc4ee; }
.sick span { display: block; width: 32px; height: 16px; padding-left: 2px; line-height: 15px; background: #0ff; }
.ev { position: relative; width: 77px; padding: 3px 0 0 8px; color: #fff; z-index: 1; }
.ev svg { position: absolute; top: 3px; right: 3px; }
.blue { background: linear-gradient(90deg, #4f84ee 5px, transparent 5px), linear-gradient(#5085f4, #2a6bf1); }
.green { background: linear-gradient(90deg, #006400 5px, transparent 5px), linear-gradient(#006400, #003a00); }
.e1 { grid-area: 2 / 3 / 4 / 4; }
.e2 { grid-area: 3 / 4 / 4 / 5; z-index: 2; }
.e3 { grid-area: 4 / 4 / 6 / 5; }
.ev em { position: absolute; left: 4px; bottom: -4px; width: 71px; height: 18px; line-height: 16px; text-align: center; font-style: normal; font-size: 11.5px; background: #227858; }
.out { grid-area: 3 / 5 / 4 / 6; width: 80px; padding: 0 0 0 4px; color: #111; border: solid #f0f; border-width: 3px 5px 1px 3px; background: linear-gradient(90deg, #f02020 1px, #fff 1px 2px, transparent 2px), repeating-linear-gradient(#fff 0 2px, #dcdcdc 2px 4px); }
.out .hd { height: 14px; margin: 0 0 2px -4px; padding-left: 4px; line-height: 13px; color: #fff; background: #ff4500; overflow: hidden; }
.out svg { top: 0; right: 1px; }
.out .x { top: auto; right: 2px; bottom: 1px; }
```
